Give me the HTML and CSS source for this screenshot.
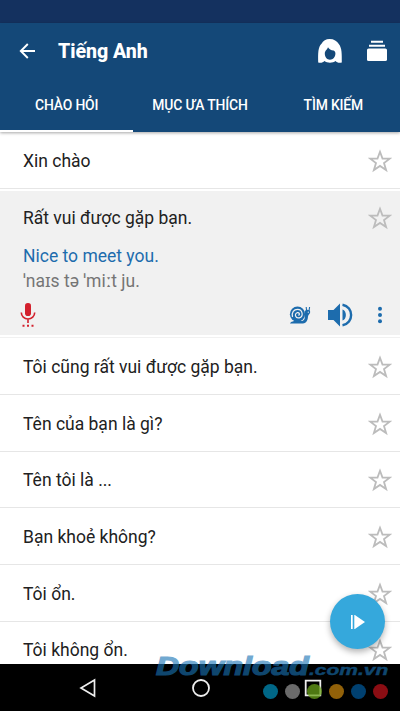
FILE: index.html
```html
<!DOCTYPE html>
<html lang="vi">
<head>
<meta charset="utf-8">
<title>Tiếng Anh</title>
<link rel="stylesheet" href="styles.css">
</head>
<body>
<svg class="defs" width="0" height="0"><symbol id="star" viewBox="0 0 24 24"><path d="M12 2.800l2.500 6.800h7.200l-5.700 4.500 2.100 7-6.100-4.200-6.100 4.200 2.100-7-5.700-4.500h7.200z" fill="none" stroke="#bcbcbc" stroke-width="1.800"/></symbol></svg>
<div class="screen">
  <div class="status"></div>
  <header class="header">
    <div class="bar">
      <svg class="back" width="18" height="18" viewBox="0 0 18 18"><path d="M17 9H2.800M9.800 2L2.800 9l7 7" fill="none" stroke="#fff" stroke-width="1.900"/></svg>
      <h1 class="title">Tiếng Anh</h1>
      <svg class="woman" width="26" height="26" viewBox="0 0 26 26"><path fill="#fff" fill-rule="evenodd" d="M1.200 24.500C1 15 1 9 4.500 5.700 6 3 9 1 12.500 1 17 1 20 3 21.800 6c3.200 4 3 10 3 18.500-3 .7-5-.1-6.300-1.600C16 25.200 10 25.200 7.500 22.900 6 24.600 4 25 1.200 24.500zM11 9.200C10 12 7.800 12.500 7.800 15.500c0 3.700 2.200 6.200 5.200 6.200s5.400-2.500 5.400-6.200c0-1.700-.6-2.500-1.800-3.100-2.600-.2-4.500-1.200-5.600-3.200z"/></svg>
      <svg class="stack" width="22" height="22" viewBox="0 0 22 22" fill="#fff"><path d="M5 .8h12v2H5zM3 4.800h16v2H3z"/><rect x="1" y="8.500" width="20" height="12.500" rx="1.600"/></svg>
    </div>
    <nav class="tabs">
      <div class="tab active"><span>CHÀO HỎI</span></div>
      <div class="tab"><span>MỤC ƯA THÍCH</span></div>
      <div class="tab"><span>TÌM KIẾM</span></div>
    </nav>
  </header>
  <main class="list">
    <div class="row first"><span>Xin chào</span><svg class="star"><use href="#star"/></svg></div>
    <section class="open">
      <div class="row head"><span>Rất vui được gặp bạn.</span><svg class="star"><use href="#star"/></svg></div>
      <p class="english">Nice to meet you.</p>
      <p class="phonetic">ˈnaɪs tə ˈmiːt ju.</p>
      <div class="actions">
        <svg width="16" height="26" viewBox="0 0 16 26"><rect x="5" y="1" width="6" height="13" rx="2.800" fill="#d3212d"/><path d="M1.300 10.500a6.700 6.500 0 0 0 13.400 0M8 17v4" fill="none" stroke="#d3212d" stroke-width="1.600"/><path d="M2.500 23.800h2M7 23.800h2M11.500 23.800h2" stroke="#d3212d" stroke-width="2"/></svg>
        <svg class="snail" width="22" height="20" viewBox="0 0 22 20"><path d="M1 18.600c.5-2 2.500-2 4-2.600h7c3 0 3.800-2 3.800-4V7c0-3 5.400-3 5.400 0 0 2-2 2.300-2.200 4.500-.3 5-2.500 7.100-6.500 7.100z" fill="#1d6cad"/><circle cx="8.500" cy="9.200" r="7.600" fill="#1d6cad"/><path d="M3.500 12C2.300 7.500 5 4.300 8.500 4.300c5.300 0 6.300 7.300 1.800 8.500-3.800 1-5.300-4-2.200-5.100 2.200-.6 3.200 2 1.300 2.700" fill="none" stroke="#f1f1f1" stroke-width="1.200"/><path d="M17.600 6l-.4-4M20 6l.6-4" stroke="#1d6cad" stroke-width="1.100"/><circle cx="19.300" cy="7.200" r=".6" fill="#f1f1f1"/></svg>
        <svg class="sound" width="26" height="26" viewBox="0 0 26 26"><path d="M1 8h5.500L13 1.500v23L6.500 18H1z" fill="#1d6cad"/><path d="M15.500 7.500v11c4.500-1 4.500-10 0-11z" fill="#1d6cad"/><path d="M15.500 2.700c11.500 2 11.500 18.600 0 20.600" fill="none" stroke="#1d6cad" stroke-width="2.400"/></svg>
        <svg class="more" width="6" height="18" viewBox="0 0 6 18" fill="#1d6cad"><circle cx="3" cy="2.800" r="2"/><circle cx="3" cy="9" r="2"/><circle cx="3" cy="15.200" r="2"/></svg>
      </div>
    </section>
    <div class="row after"><span>Tôi cũng rất vui được gặp bạn.</span><svg class="star"><use href="#star"/></svg></div>
    <div class="row"><span>Tên của bạn là gì?</span><svg class="star"><use href="#star"/></svg></div>
    <div class="row"><span>Tên tôi là ...</span><svg class="star"><use href="#star"/></svg></div>
    <div class="row"><span>Bạn khoẻ không?</span><svg class="star"><use href="#star"/></svg></div>
    <div class="row"><span>Tôi ổn.</span><svg class="star"><use href="#star"/></svg></div>
    <div class="row"><span>Tôi không ổn.</span><svg class="star"><use href="#star"/></svg></div>
  </main>
  <footer class="nav">
    <svg width="18" height="20" viewBox="0 0 18 20"><path d="M15.500 2v16L2 10z" fill="none" stroke="#eee" stroke-width="1.700"/></svg>
    <svg width="20" height="20" viewBox="0 0 20 20"><circle cx="10" cy="10" r="8" fill="none" stroke="#eee" stroke-width="1.800"/></svg>
    <svg width="18" height="18" viewBox="0 0 18 18"><path d="M1.700 1.700h14.600v14.600H1.700z" fill="none" stroke="#eee" stroke-width="1.800"/></svg>
  </footer>
  <div class="dots"><i class="teal"></i><i class="gray"></i><i class="green"></i><i class="amber"></i><i class="navy"></i><i class="red"></i></div>
  <div class="mark"><b>Download</b><em>.com.vn</em></div>
  <div class="fab"><svg width="16" height="16" viewBox="0 0 16 16" fill="#fff"><path d="M1 1h1.700v14H1zM4.300 1h1v14h-1zM5.200 1.300L15 8l-9.800 6.700z"/></svg></div>
</div>
</body>
</html>
```

FILE: styles.css
```css
* { box-sizing: border-box; }
body { margin: 0; font-family: Roboto, "Noto Sans", sans-serif; color: #212121; }
.defs { position: absolute; }
.screen { position: relative; width: 400px; height: 711px; overflow: hidden; background: #fff; display: flex; flex-direction: column; }
.status { height: 23px; flex: none; background: #14315f; }
.header { height: 109px; flex: none; background: #144878; color: #fff; box-shadow: 0 1px 3px rgba(0,0,0,.35); z-index: 1; }
.bar { height: 56px; display: flex; align-items: center; padding: 0 12px 0 18px; }
.title { flex: 1; margin: 0 0 0 22px; font-size: 19.6px; font-weight: 800; letter-spacing: -.05px; }
.woman { margin-right: 1px; }
.stack { margin-left: 22px; }
.tabs { height: 53px; display: flex; }
.tab { flex: 1; display: flex; align-items: center; justify-content: center; font-size: 13.9px; font-weight: 500; letter-spacing: -.15px; border-bottom: 2px solid transparent; white-space: nowrap; }
.active { border-color: #fff; }
.list { flex: 1; min-height: 0; overflow: hidden; }
.row { height: 56.67px; display: flex; align-items: center; justify-content: space-between; padding: 1.5px 8px 0 23px; border-bottom: 1px solid #e6e6e6; font-size: 17.5px; white-space: nowrap; }
.first { height: 57px; }
.star { width: 24px; height: 24px; flex: none; }
.open { height: 148px; background: #f1f1f1; border-top: 2px solid #fff; border-bottom: 2px solid #fff; }
.after { height: 58px; border-top: 1px solid #f1f1f1; }
.head { height: 53px; border: 0; padding-top: 0; }
p { margin: 0 0 0 23px; font-size: 17.5px; line-height: 25px; }
.english { color: #1d6cad; }
.phonetic { color: #757575; }
.actions { display: flex; align-items: center; height: 42px; padding: 0 17px 0 20px; }
.snail { margin-left: auto; }
.sound { margin-left: 16px; }
.more { margin-left: 24px; }
.nav { height: 47px; flex: none; background: #000; display: flex; align-items: center; justify-content: space-between; padding: 0 78px 0 79px; }
.dots { position: absolute; left: 263px; top: 684px; display: flex; gap: 7px; }
.dots i { width: 15px; height: 15px; border-radius: 50%; opacity: .75; }
.teal { background: #0089b4; }
.gray { background: #8e8e8e; }
.green { background: #68a018; }
.amber { background: #c3810c; }
.navy { background: #005596; }
.red { background: #b9111a; }
.mark { position: absolute; left: 156px; top: 652px; width: 234px; display: flex; align-items: baseline; color: #1973b4; opacity: .61; font-family: "Liberation Sans", sans-serif; font-style: italic; font-weight: 700; line-height: 28px; white-space: nowrap; }
.mark b { font-size: 25px; width: 153px; transform: scaleX(1.28); transform-origin: left; -webkit-text-stroke: 1.2px #1973b4; }
.mark em { font-size: 15px; transform: scaleX(1.4); transform-origin: left; -webkit-text-stroke: .4px #1973b4; }
.fab { position: absolute; left: 330px; top: 594px; width: 55px; height: 55px; border-radius: 50%; background: #35a8dc; box-shadow: 0 3px 6px rgba(0,0,0,.3); display: flex; align-items: center; justify-content: center; }
```
